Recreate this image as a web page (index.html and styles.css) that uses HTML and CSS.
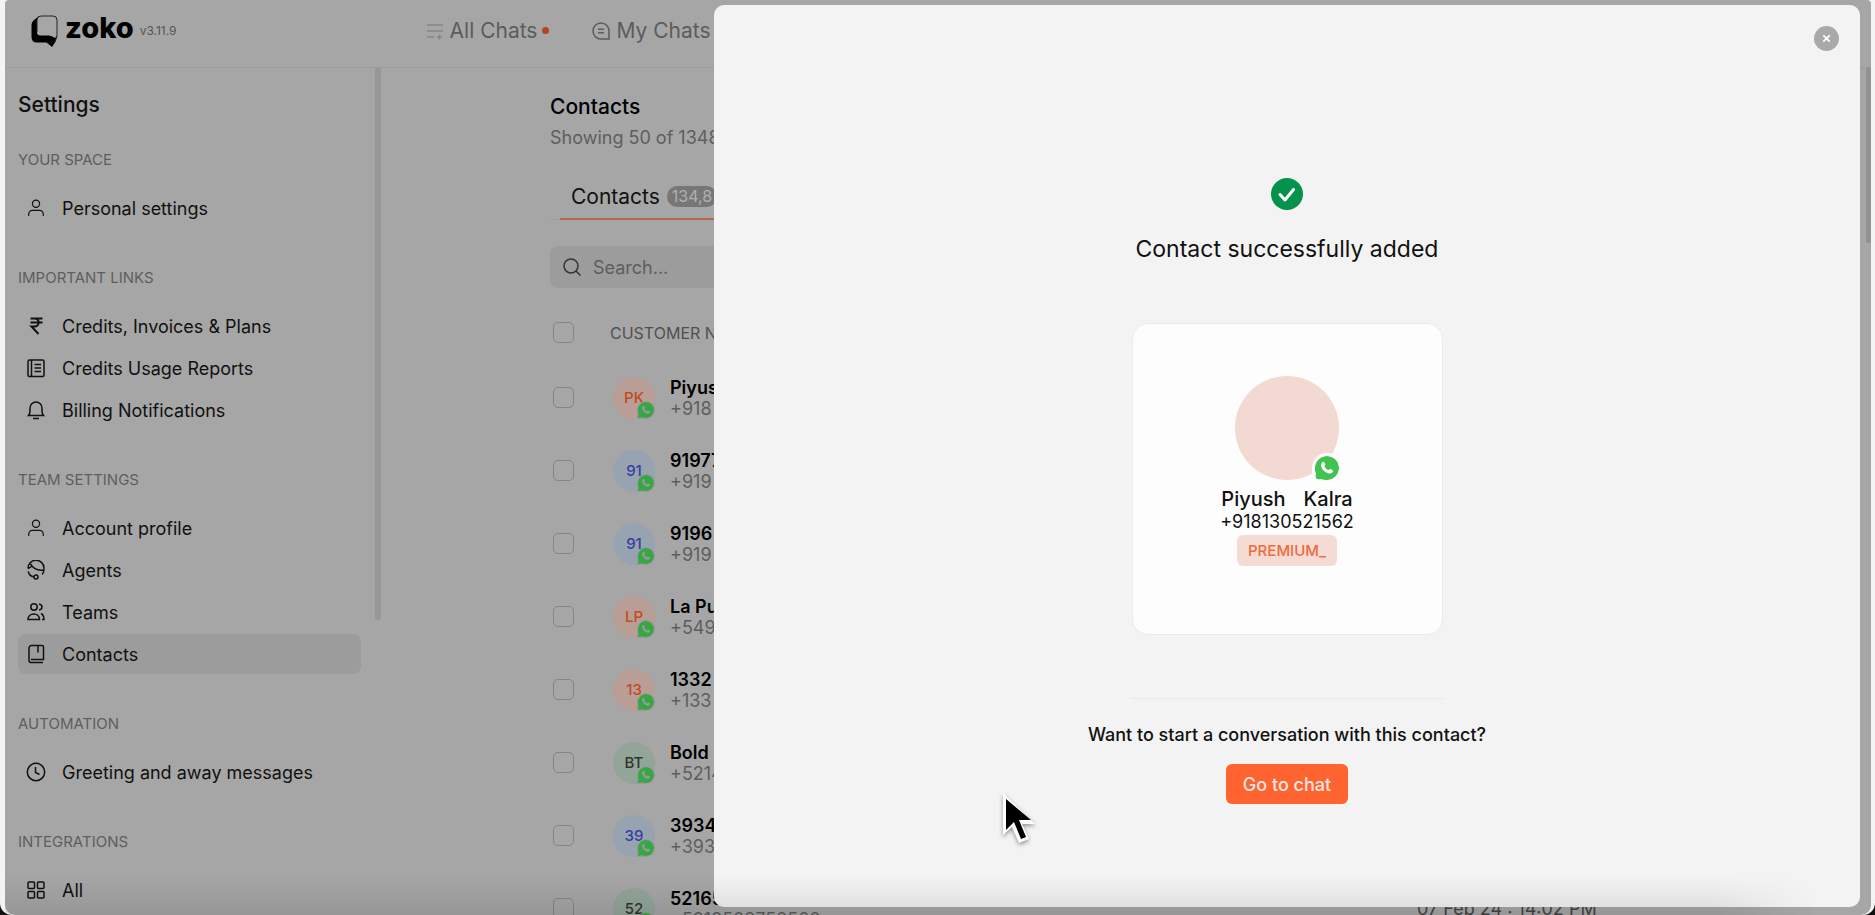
FILE: index.html
```html
<!DOCTYPE html>
<html lang="en">
    <head>
        <meta charset="utf-8">
        <title>Zoko - Contacts</title>
        <link rel="stylesheet" href="styles.css">
    </head>
    <body>
        <!-- shared icons -->
        <svg class="sprite" aria-hidden="true">
            <symbol id="user" viewBox="0 0 20 20">
                <circle cx="10" cy="5.7" r="3.6"/>
                <path d="M2.7 18v-1.8a3.8 3.8 0 0 1 3.8-3.8h7a3.8 3.8 0 0 1 3.8 3.8V18"/>
            </symbol>
            <symbol id="whatsapp" viewBox="0 0 24 24">
                <path fill="#41c351" stroke="none" d="M12 0a12 12 0 0 1 0 24c-2 0-4-.3-5.500-1L0 24l1-6.500A12 12 0 0 1 12 0z"/>
                <path fill="currentColor" stroke="none" d="M7.300 6.200c.7-.8 1.700-.7 2.100.2l.8 1.900c.2.500 0 .9-.9 2 .9 1.800 2.200 3 4.200 3.900.9-1.200 1.300-1.500 1.900-1.200l2 1c.8.4.7 1 .4 1.800-.6 1.300-2.100 2-3.800 1.700-3.800-.7-7.100-3.900-7.800-7.200-.3-1.600.2-3.200 1.100-4.100z"/>
            </symbol>
        </svg>

        <div id="app">
            <header class="topbar">
                <svg class="logoMark" viewBox="0 0 28 32">
                    <path d="M8 1 2.500 5.500Q.5 7 .5 10v12q0 5.500 5.500 5.500h9.500L21 32l3-4.500 2-6.500-3-1H9q-3-.5-3-4z"/>
                    <path fill="#a6a6a6" d="M10 1h12q4 0 4 4v15.500l-2 2.500q-2-2-6-2.500H9.500q-3.500 0-3.500-3.500V5q0-4 4-4z"/>
                    <path fill="none" stroke="#222" d="M6 17V5q0-4 4-4h12q4 0 4 4v16l-2 6"/>
                </svg>
                <span class="logoText">zoko</span>
                <span class="version">v3.11.9</span>
                <nav class="chatNav">
                    <a href="#">
                        <svg class="icon pale" viewBox="0 0 20 20"><path d="M2 4h16M2 10h16M2 16h7M14.500 13.500v5M12 16h5"/></svg>
                        All Chats <i class="dot"></i>
                    </a>
                    <a href="#">
                        <svg class="icon" viewBox="0 0 20 20"><path d="M18 18h-8a8 8 0 1 1 8-8zM7 8.300h6M7 11.700h6"/></svg>
                        My Chats
                    </a>
                </nav>
            </header>

            <div class="layout">
                <aside class="sidebar">
                    <h2>Settings</h2>
                    <section>
                        <h3>YOUR SPACE</h3>
                        <a href="#"><svg class="icon thin"><use href="#user"/></svg>Personal settings</a>
                    </section>
                    <section>
                        <h3>IMPORTANT LINKS</h3>
                        <a href="#"><svg class="icon heavy" viewBox="0 0 20 20"><path d="M4.500 2.500h12M4.500 6.500h12M4.500 2.500h4c5.500 0 5.500 8 0 8h-3l7 7.500"/></svg>Credits, Invoices &amp; Plans</a>
                        <a href="#"><svg class="icon" viewBox="0 0 20 20"><rect x="2" y="2" width="16" height="16.500" rx="1.500"/><path d="M5.500 2v16.500M8.500 6.500H15M8.500 10H15M8.500 13.500H15"/></svg>Credits Usage Reports</a>
                        <a href="#"><svg class="icon" viewBox="0 0 20 20"><path d="M2.500 15.500Q4 14 4 11V8a6 6 0 0 1 12 0v3q0 3 1.500 4.500zM7 18.500h6"/></svg>Billing Notifications</a>
                    </section>
                    <section>
                        <h3>TEAM SETTINGS</h3>
                        <a href="#"><svg class="icon thin"><use href="#user"/></svg>Account profile</a>
                        <a href="#"><svg class="icon" viewBox="0 0 20 20"><path d="M2 8.500a8 8 0 0 1 16-.5c.2 3.500-.5 4.500-1.800 6.500M4.500 3.800c2.500 4.500 7.500 7 13.300 6.200M2 8.500q2.500-1 4.500-3M2.200 11.500c.8 3 2.800 5 5.500 5.300"/><circle cx="10" cy="17" r="2"/></svg>Agents</a>
                        <a href="#"><svg class="icon" viewBox="0 0 20 20"><circle cx="8" cy="5" r="3.200"/><path d="M2 17.500c0-7.500 11.500-7.500 11.500 0zM13 2q3 .5 3 3t-3 3M15 11.500q3 1.500 3 6h-2"/></svg>Teams</a>
                        <a href="#" class="active"><svg class="icon" viewBox="0 0 20 20"><path d="M17 18.500H5a2 2 0 0 1-2-2V4a2.500 2.500 0 0 1 2.500-2.500H16A1.500 1.500 0 0 1 17.500 3v12.500H5M12 1.500v7"/></svg>Contacts</a>
                    </section>
                    <section>
                        <h3>AUTOMATION</h3>
                        <a href="#"><svg class="icon" viewBox="0 0 20 20"><circle cx="10" cy="10" r="8.700"/><path d="M9.500 5v5.500l4 2"/></svg>Greeting and away messages</a>
                    </section>
                    <section>
                        <h3>INTEGRATIONS</h3>
                        <a href="#"><svg class="icon" viewBox="0 0 20 20"><rect x="2" y="2" width="6.500" height="6.500" rx="1"/><rect x="11.500" y="2" width="6.500" height="6.500" rx="1"/><rect x="2" y="11.500" width="6.500" height="6.500" rx="1"/><rect x="11.500" y="11.500" width="6.500" height="6.500" rx="1"/></svg>All</a>
                    </section>
                    <div class="sideScroll"></div>
                </aside>

                <main class="content">
                    <h1>Contacts</h1>
                    <p class="showing">Showing 50 of 1348</p>
                    <div class="tabs">
                        <a href="#">Contacts <span class="count">134,8</span></a>
                    </div>
                    <label class="search">
                        <svg class="icon" viewBox="0 0 20 20"><circle cx="9" cy="9" r="7"/><path d="M14 14l4.500 4.500"/></svg>
                        <input type="text" placeholder="Search..." aria-label="Search">
                    </label>
                    <table class="contacts">
                        <colgroup>
                            <col class="tickCol"><col><col class="dateCol">
                        </colgroup>
                        <thead>
                            <tr><th class="tick"><input type="checkbox" aria-label="Select all"></th><th>CUSTOMER N</th><th></th></tr>
                        </thead>
                        <tbody id="rows"></tbody>
                    </table>
                </main>
            </div>
            <div class="pageScroll"></div>
        </div>

        <div class="panel">
            <button class="closeButton" aria-label="Close">
                <svg viewBox="0 0 10 10"><path d="M1.500 1.500l7 7M8.500 1.500l-7 7"/></svg>
            </button>
            <svg class="check" viewBox="0 0 32 32"><circle cx="16" cy="16" r="16"/><path d="M9 16.500l5 5.500 8.500-10.500"/></svg>
            <h2>Contact successfully added</h2>
            <div class="card">
                <div class="bigAvatar"><svg class="wa"><use href="#whatsapp"/></svg></div>
                <div class="cardName"><span>Piyush</span><span>Kalra</span></div>
                <div class="cardPhone">+918130521562</div>
                <span class="tag">PREMIUM_</span>
            </div>
            <hr>
            <p class="question">Want to start a conversation with this contact?</p>
            <button class="chatButton">Go to chat</button>
        </div>

        <div class="bottomShade"></div>
        <svg class="cursor" viewBox="0 0 36 54">
            <path d="M3 2v42l9-8 7 16 10-4-7-15h13z" fill="#fff"/>
            <path d="M6 8v31l8-8 7 17 5-2-7-17h12z"/>
        </svg>

        <script>
        /* Contacts shown in the table */
        const contacts = [
            { initials: "PK", color: "orange", name: "Piyush", phone: "+918" },
            { initials: "91", color: "blue", name: "91977", phone: "+919" },
            { initials: "91", color: "blue", name: "9196", phone: "+919" },
            { initials: "LP", color: "orange", name: "La Pu", phone: "+549" },
            { initials: "13", color: "orange", name: "1332", phone: "+133" },
            { initials: "BT", color: "green", name: "Bold", phone: "+5214" },
            { initials: "39", color: "blue", name: "3934", phone: "+393" },
            { initials: "52", color: "green", name: "52165", phone: "+5219523752502", date: "07 Feb 24 : 14:02 PM" }
        ];

        /* Build one table row per contact */
        document.querySelector("#rows").innerHTML = contacts.map(c => `
            <tr>
                <td class="tick"><input type="checkbox" aria-label="Select ${c.name}"></td>
                <td>
                    <div class="person">
                        <span class="avatar ${c.color}">${c.initials}<svg class="wa"><use href="#whatsapp"/></svg></span>
                        <div><b>${c.name}</b><span class="phone">${c.phone}</span></div>
                    </div>
                </td>
                <td class="date">${c.date || ""}</td>
            </tr>`).join("");
        </script>
    </body>
</html>
```
FILE: styles.css
```css
* {
    box-sizing: border-box;
}

html {
    background-color: #111;
}

body {
    margin: 0;
    height: 100vh;
    overflow: hidden;
    padding: 0 4px 0 5px;
    border-radius: 0 0 12px 12px;
    background-color: #f4f4f4;
    font-family: Inter, "Liberation Sans", sans-serif;
    font-size: 18px;
    color: #111;
}

h1, h2, h3, p {
    margin: 0;
}

a {
    color: inherit;
    text-decoration: none;
}

.sprite {
    position: absolute;
    width: 0;
    height: 0;
}

.icon {
    width: 20px;
    height: 20px;
    flex: none;
    fill: none;
    stroke: currentColor;
    stroke-width: 1.5;
}

.thin {
    stroke-width: 1.2;
}

.heavy {
    stroke-width: 2;
}

.pale {
    color: #858585;
}

#app {
    position: relative;
    height: 100%;
    overflow: hidden;
    display: flex;
    flex-direction: column;
    background-color: #a6a6a6;
    border-radius: 4px 4px 10px 10px;
}

/* Top bar */
.topbar {
    display: flex;
    align-items: center;
    flex: none;
    height: 68px;
    padding: 0 0 6px 26px;
    border-bottom: 1px solid #9c9c9c;
}

.logoMark {
    width: 28px;
    height: 32px;
}

.logoText {
    margin-left: 6px;
    font-size: 29px;
    font-weight: 800;
    line-height: 30px;
    padding-bottom: 6px;
    color: #000;
}

.version {
    margin-left: 6px;
    font-size: 12px;
    color: #555;
}

.chatNav {
    display: flex;
    gap: 42px;
    margin-left: 248px;
    font-size: 21px;
    color: #5c5c5c;
}

.chatNav a {
    display: flex;
    align-items: center;
    gap: 5px;
}

.dot {
    width: 7px;
    height: 7px;
    border-radius: 50%;
    background-color: #b8431c;
}

/* Sidebar */
.layout {
    display: flex;
    flex: 1;
    min-height: 0;
}

.sidebar {
    position: relative;
    flex: none;
    width: 377px;
    padding: 25px 21px 0 13px;
    overflow: hidden;
}

.sidebar h2 {
    margin-bottom: 32px;
    font-size: 21px;
    font-weight: 500;
    line-height: 24px;
}

.sidebar section {
    margin-bottom: 39px;
}

.sidebar h3 {
    margin-bottom: 18px;
    font-size: 15px;
    font-weight: 400;
    line-height: 21px;
    color: #5e5e5e;
}

.sidebar a {
    display: flex;
    align-items: center;
    gap: 16px;
    height: 40px;
    padding-left: 8px;
    border-radius: 8px;
}

.sidebar a + a {
    margin-top: 2px;
}

.sidebar .active {
    background-color: #9b9c9b;
}

.sideScroll {
    position: absolute;
    top: 0;
    right: 1px;
    width: 6px;
    height: 552px;
    border-radius: 0 0 3px 3px;
    background-color: #979797;
}

.pageScroll {
    position: absolute;
    top: 67px;
    right: 0;
    width: 5px;
    height: 176px;
    border-radius: 3px;
    background-color: #929292;
}

/* Contacts list */
.content {
    flex: 1;
    padding: 26px 40px 0 168px;
}

.content h1 {
    font-size: 21px;
    font-weight: 500;
    line-height: 26px;
    color: #000;
}

.showing {
    margin-top: 6px;
    line-height: 24px;
    color: #5e5e5e;
}

.tabs {
    height: 46px;
    margin: 24px 0 26px;
    padding-left: 10px;
    border-bottom: 1px solid #9c9c9c;
}

.tabs a {
    display: flex;
    align-items: center;
    gap: 7px;
    width: 200px;
    height: 46px;
    padding-left: 11px;
    font-size: 21px;
    border-bottom: 2px solid #b5694c;
}

.count {
    padding: 0 5px;
    font-size: 16px;
    line-height: 21px;
    border-radius: 11px;
    background-color: #777;
    color: #b0b0b0;
}

.search {
    display: flex;
    align-items: center;
    gap: 9px;
    height: 42px;
    padding-left: 12px;
    border-radius: 8px;
    background-color: #9b9c9b;
    color: #333;
}

.search input {
    flex: 1;
    border: 0;
    background: none;
    font: inherit;
}

.search input::placeholder {
    color: #5e5e5e;
}

.contacts {
    width: 100%;
    margin-top: 16px;
    border-collapse: collapse;
    table-layout: fixed;
}

.tickCol {
    width: 60px;
}

.dateCol {
    width: 414px;
}

.contacts th,
.contacts td {
    padding: 0;
    text-align: left;
}

.contacts th {
    height: 57px;
    font-size: 16px;
    font-weight: 400;
    color: #505050;
}

.contacts td {
    height: 73px;
}

.contacts .tick {
    padding-left: 3px;
}

.tick input {
    appearance: none;
    display: block;
    width: 21px;
    height: 21px;
    margin: 0;
    border: 1px solid #858585;
    border-radius: 5px;
}

.contacts .date {
    color: #444;
}

.person {
    display: flex;
    align-items: center;
    gap: 15px;
    padding-left: 3px;
}

.person b {
    display: block;
    font-weight: 600;
    line-height: 21px;
    color: #000;
}

.phone {
    display: block;
    line-height: 21px;
    color: #5e5e5e;
}

.avatar {
    position: relative;
    display: flex;
    align-items: center;
    justify-content: center;
    width: 42px;
    height: 42px;
    border-radius: 50%;
    font-size: 15px;
    font-weight: 500;
}

.avatar .wa {
    position: absolute;
    right: 0;
    bottom: 0;
    width: 18px;
    height: 18px;
    padding: 1px;
    border-radius: 50% 50% 50% 0;
    background-color: #b5b5b5;
    color: #b5b5b5;
    filter: brightness(0.85);
}

.orange {
    background-color: #b89e95;
    color: #c44a24;
}

.blue {
    background-color: #98a3b1;
    color: #3440a0;
}

.green {
    background-color: #93a599;
    color: #333;
}

/* Slide-over panel */
.panel {
    position: fixed;
    top: 5px;
    right: 15px;
    bottom: 8px;
    left: 38.08%;
    display: flex;
    flex-direction: column;
    align-items: center;
    padding-top: 173px;
    border-radius: 10px;
    background-color: #f3f3f3;
}

.closeButton {
    position: absolute;
    top: 21px;
    right: 21px;
    display: flex;
    align-items: center;
    justify-content: center;
    width: 25px;
    height: 25px;
    padding: 0;
    border: 0;
    border-radius: 50%;
    background-color: #a9a9a9;
}

.closeButton svg {
    width: 9px;
    height: 9px;
    stroke: #fff;
    stroke-width: 2;
}

.check {
    width: 32px;
    height: 32px;
    fill: #05924b;
}

.check path {
    fill: none;
    stroke: #fff;
    stroke-width: 3;
    stroke-linecap: round;
    stroke-linejoin: round;
}

.panel h2 {
    margin-top: 24px;
    font-size: 23px;
    font-weight: 400;
    line-height: 30px;
}

.card {
    display: flex;
    flex-direction: column;
    align-items: center;
    width: 311px;
    height: 312px;
    margin-top: 59px;
    padding-top: 52px;
    border: 1px solid #ebebeb;
    border-radius: 16px;
    background-color: #fdfdfd;
}

.bigAvatar {
    position: relative;
    width: 104px;
    height: 104px;
    border-radius: 50%;
    background-color: #f2dad2;
}

.bigAvatar .wa {
    position: absolute;
    right: -3px;
    bottom: -3px;
    width: 30px;
    height: 30px;
    padding: 3px;
    border-radius: 50% 50% 50% 8px;
    background-color: #fdfdfd;
    color: #fdfdfd;
}

.cardName {
    display: flex;
    gap: 18px;
    margin-top: 7px;
    font-size: 20px;
    font-weight: 500;
    line-height: 24px;
}

.cardPhone {
    line-height: 21px;
}

.tag {
    margin-top: 3px;
    padding: 0 11px;
    font-size: 15px;
    font-weight: 500;
    line-height: 31px;
    border-radius: 6px;
    background-color: #f4dbd3;
    color: #f06a3e;
}

.panel hr {
    width: 312px;
    margin: 63px 0 0;
    border: 0;
    border-top: 1px solid #e9e9e9;
}

.question {
    margin-top: 24px;
    font-weight: 500;
    line-height: 24px;
}

.chatButton {
    height: 40px;
    margin-top: 17px;
    padding: 0 17px;
    border: 0;
    border-radius: 6px;
    background-color: #ff6430;
    color: #f4e6e0;
    font: inherit;
    font-weight: 500;
}

/* Dock shade along the bottom edge */
.bottomShade {
    position: fixed;
    right: 60px;
    bottom: 0;
    left: 5px;
    height: 38px;
    background: linear-gradient(transparent, rgba(0, 0, 0, 0.09));
    mask-image: linear-gradient(to left, transparent, #000 100px);
    pointer-events: none;
}

.cursor {
    position: fixed;
    top: 791px;
    left: 1000px;
    width: 36px;
    height: 54px;
    filter: drop-shadow(0 2px 2px rgba(0, 0, 0, 0.4));
}
```
